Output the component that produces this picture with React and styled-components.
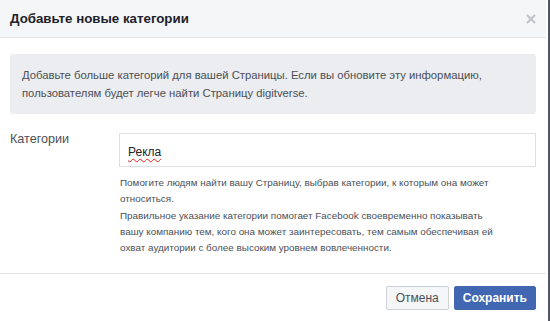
import React from "react";
import styled, { createGlobalStyle } from "styled-components";

const GlobalStyle = createGlobalStyle`
  body {
    margin: 0;
    background: #fff;
    font-family: "Liberation Sans", Arial, sans-serif;
  }
`;

const Dialog = styled.div`
  width: 546px;
  min-height: 321px;
  display: flex;
  flex-direction: column;
  background: #fff;
  border-right: 2px solid #4f5866;
  padding-right: 2px;
`;

const Header = styled.div`
  height: 37px;
  flex-shrink: 0;
  display: flex;
  align-items: center;
  justify-content: space-between;
  padding: 0 10px;
  background: #f5f6f7;
  border-bottom: 1px solid #e5e5e5;
`;

const Title = styled.h1`
  margin: 0;
  font-size: 13.3px;
  font-weight: bold;
  color: #1d2129;
`;

const Close = styled.button`
  width: 10px;
  height: 10px;
  padding: 0;
  border: 0;
  background: none;
  display: flex;
  align-items: center;
  justify-content: center;
`;

const Body = styled.div`
  padding: 16px 10px 17px 10px;
  border-bottom: 1px solid #e5e5e5;
`;

const Notice = styled.div`
  background: #ebedf0;
  border-radius: 3px;
  padding: 12px;
  font-size: 11.3px;
  line-height: 18px;
  color: #4b4f56;
`;

const Row = styled.div`
  display: flex;
  margin-top: 19px;
`;

const Label = styled.div`
  width: 109px;
  font-size: 12.6px;
  line-height: 12px;
  color: #4b4f56;
`;

const Field = styled.div`
  flex: 1;
`;

const Input = styled.div`
  height: 34px;
  box-sizing: border-box;
  display: flex;
  align-items: center;
  padding: 4px 8px 0;
  border: 1px solid #dddfe2;
  font-size: 12px;
  color: #1d2129;
`;

const Typo = styled.span`
  text-decoration: underline wavy #e0231b;
  text-decoration-thickness: 1px;
  text-underline-offset: 2px;
`;

const Help = styled.p`
  margin: 8px 0 0 1px;
  max-width: 380px;
  font-size: 9.9px;
  line-height: 16.3px;
  color: #4b4f56;
`;

const Footer = styled.div`
  display: flex;
  justify-content: flex-end;
  gap: 5px;
  padding: 12px 10px;
`;

const Button = styled.button`
  height: 24px;
  box-sizing: border-box;
  padding: 0 ${(p) => (p.$primary ? "8px" : "9px")};
  border-radius: 2px;
  border: 1px solid ${(p) => (p.$primary ? "#4267b2" : "#ccd0d5")};
  background: ${(p) => (p.$primary ? "#4267b2" : "#f5f6f7")};
  color: ${(p) => (p.$primary ? "#fff" : "#4b4f56")};
  font-family: "Liberation Sans", Arial, sans-serif;
  font-size: 12px;
  font-weight: ${(p) => (p.$primary ? "bold" : "normal")};
`;

export default function App() {
  return (
    <>
      <GlobalStyle />
      <Dialog>
        <Header>
          <Title>Добавьте новые категории</Title>
          <Close aria-label="Закрыть">
            <svg width="10" height="10" viewBox="0 0 10 10">
              <path d="M1 1L9 9M9 1L1 9" stroke="#bec2c9" strokeWidth="2" />
            </svg>
          </Close>
        </Header>
        <Body>
          <Notice>
            Добавьте больше категорий для вашей Страницы. Если вы обновите эту
            информацию, пользователям будет легче найти Страницу digitverse.
          </Notice>
          <Row>
            <Label>Категории</Label>
            <Field>
              <Input>
                <Typo>Рекла</Typo>
              </Input>
              <Help>
                Помогите людям найти вашу Страницу, выбрав категории, к которым
                она может относиться.
                <br />
                Правильное указание категории помогает Facebook своевременно
                показывать вашу компанию тем, кого она может заинтересовать, тем
                самым обеспечивая ей охват аудитории с более высоким уровнем
                вовлеченности.
              </Help>
            </Field>
          </Row>
        </Body>
        <Footer>
          <Button>Отмена</Button>
          <Button $primary>Сохранить</Button>
        </Footer>
      </Dialog>
    </>
  );
}
